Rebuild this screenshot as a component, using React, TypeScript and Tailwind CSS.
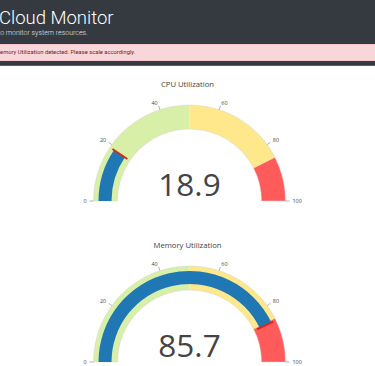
import React from "react";

type Step = { from: number; to: number; color: string };

const STEPS: Step[] = [
  { from: 0, to: 50, color: "#d7efa6" },
  { from: 50, to: 85, color: "#fee88b" },
  { from: 85, to: 100, color: "#ff5b5b" },
];

const CX = 189.5;
const CY = 135;
const R_OUT = 96;
const R_IN = 72;

function pt(v: number, r: number) {
  const a = Math.PI * (1 - v / 100);
  return [CX + r * Math.cos(a), CY - r * Math.sin(a)];
}

// annular sector between two values
function sector(v1: number, v2: number, r0: number, r1: number) {
  const [x1, y1] = pt(v1, r1);
  const [x2, y2] = pt(v2, r1);
  const [x3, y3] = pt(v2, r0);
  const [x4, y4] = pt(v1, r0);
  return `M${x1} ${y1} A${r1} ${r1} 0 0 1 ${x2} ${y2} L${x3} ${y3} A${r0} ${r0} 0 0 0 ${x4} ${y4} Z`;
}

function Gauge({ title, value }: { title: string; value: number }) {
  const [tx1, ty1] = pt(value, 75);
  const [tx2, ty2] = pt(value, 93);
  return (
    <div className="relative h-[161px] w-full">
      <p className="absolute left-0 right-0 top-[15px] text-center font-['Open_Sans',sans-serif] text-[7.7px] leading-none text-[#444]">
        {title}
      </p>
      <svg className="absolute inset-0" width="375" height="161" viewBox="0 0 375 161">
        {STEPS.map((s) => (
          <path key={s.from} d={sector(s.from, s.to, R_IN, R_OUT)} fill={s.color} />
        ))}
        <path d={sector(0, 100, R_IN, R_OUT)} fill="none" stroke="#d4d4d4" strokeWidth="0.5" />
        <path d={sector(0, value, 78, 91)} fill="#1f77b4" />
        <line x1={tx1} y1={ty1} x2={tx2} y2={ty2} stroke="#e0261b" strokeWidth="2" />
        {[0, 20, 40, 60, 80, 100].map((t) => {
          const [a1, b1] = pt(t, R_OUT);
          const [a2, b2] = pt(t, R_OUT + 4);
          const [lx, ly] = pt(t, R_OUT + 7);
          const anchor = t < 50 ? "end" : t > 50 ? "start" : "middle";
          return (
            <g key={t}>
              <line x1={a1} y1={b1} x2={a2} y2={b2} stroke="#666" strokeWidth="0.5" />
              <text
                x={lx}
                y={ly + 2}
                fontSize="5.4"
                fill="#444"
                textAnchor={anchor}
                fontFamily="'Open Sans', sans-serif"
              >
                {t}
              </text>
            </g>
          );
        })}
        <text
          x={CX}
          y={CY - 5}
          fontSize="31.5"
          fill="#444"
          textAnchor="middle"
          fontFamily="'Open Sans', sans-serif"
        >
          {value}
        </text>
      </svg>
    </div>
  );
}

export default function App() {
  return (
    <div className="h-[366px] w-[375px] overflow-hidden bg-white">
      <header className="h-[66px] border-b border-[#5a5f65] bg-[#343a40] pt-[7px]">
        <h1 className="-ml-[1px] whitespace-nowrap font-['Roboto',sans-serif] text-[18.5px] font-light leading-[22px] text-white">
          Cloud Monitor
        </h1>
        <p className="-ml-[2px] whitespace-nowrap font-['Roboto',sans-serif] text-[7px] font-light leading-[9px] text-[#e2e3e5]">
          to monitor system resources.
        </p>
        <div className="mt-[6px] h-[17px] border-y border-[#f5c6cb] bg-[#f8d7da]">
          <p className="-ml-[5px] whitespace-nowrap font-['Roboto',sans-serif] text-[5.8px] leading-[15px] text-[#721c24]">
            Memory Utilization detected. Please scale accordingly.
          </p>
        </div>
      </header>
      <Gauge title="CPU Utilization" value={18.9} />
      <Gauge title="Memory Utilization" value={85.7} />
    </div>
  );
}
